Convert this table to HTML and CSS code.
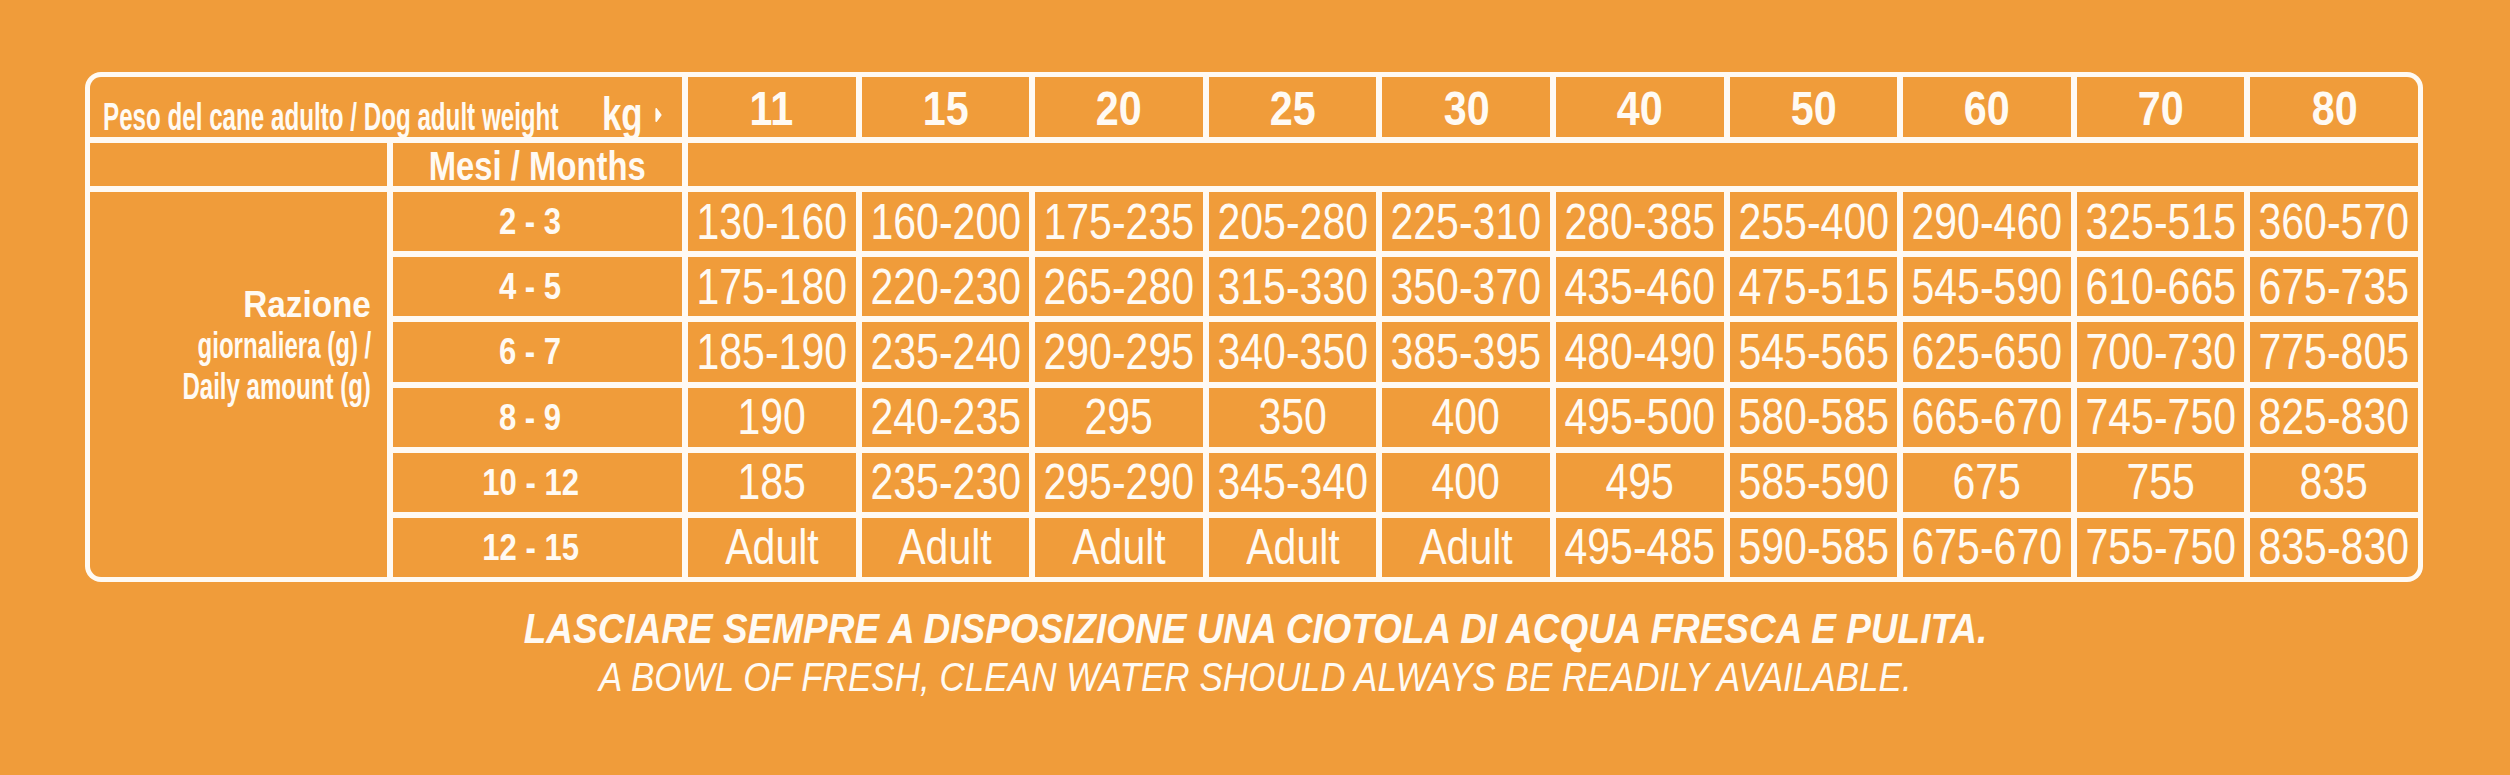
FILE: index.html
```html
<!DOCTYPE html>
<html lang="it">
<head>
<meta charset="utf-8">
<title>Razione giornaliera</title>
<link rel="stylesheet" href="styles.css">
</head>
<body>
<main class="page">
  <div class="chart">
    <div class="cell head-label corner-tl">
      <span class="head-text"><span class="t">Peso del cane adulto / Dog adult weight</span></span>
      <span class="kg"><span class="t">kg</span></span>
      <svg class="arrow" width="7" height="16" viewBox="0 0 7 16"><path d="M1.2 1.8 L5.8 8 L1.2 14.2 Z" fill="#fffaf3" stroke="#fffaf3" stroke-width="1.6" stroke-linejoin="round"/></svg>
    </div>
    <div class="cell weight"><span class="t">11</span></div>
    <div class="cell weight"><span class="t">15</span></div>
    <div class="cell weight"><span class="t">20</span></div>
    <div class="cell weight"><span class="t">25</span></div>
    <div class="cell weight"><span class="t">30</span></div>
    <div class="cell weight"><span class="t">40</span></div>
    <div class="cell weight"><span class="t">50</span></div>
    <div class="cell weight"><span class="t">60</span></div>
    <div class="cell weight"><span class="t">70</span></div>
    <div class="cell weight corner-tr"><span class="t">80</span></div>

    <div class="cell"></div>
    <div class="cell months-head"><span class="t">Mesi / Months</span></div>
    <div class="cell span-weights"></div>

    <div class="cell ration corner-bl">
      <span class="t line-a">Razione</span>
      <span class="t line-b">giornaliera (g) /</span>
      <span class="t line-b">Daily amount (g)</span>
    </div>

    <div class="cell month"><span class="t">2 - 3</span></div>
    <div class="cell val"><span class="t">130-160</span></div><div class="cell val"><span class="t">160-200</span></div><div class="cell val"><span class="t">175-235</span></div><div class="cell val"><span class="t">205-280</span></div><div class="cell val"><span class="t">225-310</span></div><div class="cell val"><span class="t">280-385</span></div><div class="cell val"><span class="t">255-400</span></div><div class="cell val"><span class="t">290-460</span></div><div class="cell val"><span class="t">325-515</span></div><div class="cell val"><span class="t">360-570</span></div>

    <div class="cell month"><span class="t">4 - 5</span></div>
    <div class="cell val"><span class="t">175-180</span></div><div class="cell val"><span class="t">220-230</span></div><div class="cell val"><span class="t">265-280</span></div><div class="cell val"><span class="t">315-330</span></div><div class="cell val"><span class="t">350-370</span></div><div class="cell val"><span class="t">435-460</span></div><div class="cell val"><span class="t">475-515</span></div><div class="cell val"><span class="t">545-590</span></div><div class="cell val"><span class="t">610-665</span></div><div class="cell val"><span class="t">675-735</span></div>

    <div class="cell month"><span class="t">6 - 7</span></div>
    <div class="cell val"><span class="t">185-190</span></div><div class="cell val"><span class="t">235-240</span></div><div class="cell val"><span class="t">290-295</span></div><div class="cell val"><span class="t">340-350</span></div><div class="cell val"><span class="t">385-395</span></div><div class="cell val"><span class="t">480-490</span></div><div class="cell val"><span class="t">545-565</span></div><div class="cell val"><span class="t">625-650</span></div><div class="cell val"><span class="t">700-730</span></div><div class="cell val"><span class="t">775-805</span></div>

    <div class="cell month"><span class="t">8 - 9</span></div>
    <div class="cell val"><span class="t">190</span></div><div class="cell val"><span class="t">240-235</span></div><div class="cell val"><span class="t">295</span></div><div class="cell val"><span class="t">350</span></div><div class="cell val"><span class="t">400</span></div><div class="cell val"><span class="t">495-500</span></div><div class="cell val"><span class="t">580-585</span></div><div class="cell val"><span class="t">665-670</span></div><div class="cell val"><span class="t">745-750</span></div><div class="cell val"><span class="t">825-830</span></div>

    <div class="cell month"><span class="t">10 - 12</span></div>
    <div class="cell val"><span class="t">185</span></div><div class="cell val"><span class="t">235-230</span></div><div class="cell val"><span class="t">295-290</span></div><div class="cell val"><span class="t">345-340</span></div><div class="cell val"><span class="t">400</span></div><div class="cell val"><span class="t">495</span></div><div class="cell val"><span class="t">585-590</span></div><div class="cell val"><span class="t">675</span></div><div class="cell val"><span class="t">755</span></div><div class="cell val"><span class="t">835</span></div>

    <div class="cell month"><span class="t">12 - 15</span></div>
    <div class="cell val"><span class="t">Adult</span></div><div class="cell val"><span class="t">Adult</span></div><div class="cell val"><span class="t">Adult</span></div><div class="cell val"><span class="t">Adult</span></div><div class="cell val"><span class="t">Adult</span></div><div class="cell val"><span class="t">495-485</span></div><div class="cell val"><span class="t">590-585</span></div><div class="cell val"><span class="t">675-670</span></div><div class="cell val"><span class="t">755-750</span></div><div class="cell val corner-br"><span class="t">835-830</span></div>
  </div>

  <div class="note">
    <p class="note-it"><span class="t">LASCIARE SEMPRE A DISPOSIZIONE UNA CIOTOLA DI ACQUA FRESCA E PULITA.</span></p>
    <p class="note-en"><span class="t">A BOWL OF FRESH, CLEAN WATER SHOULD ALWAYS BE READILY AVAILABLE.</span></p>
  </div>
</main>
</body>
</html>
```
FILE: styles.css
```css
html, body {
  margin: 0;
  padding: 0;
}

body {
  background: #f09c3a;
  color: #fffaf3;
  font-family: "Liberation Sans", Arial, sans-serif;
  width: 2510px;
  height: 775px;
  overflow: hidden;
}

.page {
  padding-top: 72px;
}

.t {
  display: inline-block;
  white-space: nowrap;
  transform-origin: center center;
}

.chart {
  margin-left: 85px;
  width: 2338px;
  height: 510px;
  box-sizing: border-box;
  padding: 5px;
  background: #fffaf3;
  border-radius: 16px;
  display: grid;
  grid-template-columns: 297px 289px repeat(10, minmax(0, 1fr));
  grid-template-rows: 60px 43px repeat(6, minmax(0, 1fr));
  gap: 6px;
}

.cell {
  background: #f09c3a;
  display: flex;
  align-items: center;
  justify-content: center;
  line-height: 1;
  white-space: nowrap;
  min-width: 0;
}

.corner-tl { border-top-left-radius: 11px; }
.corner-tr { border-top-right-radius: 11px; }
.corner-bl { border-bottom-left-radius: 11px; }
.corner-br { border-bottom-right-radius: 11px; }

.head-label {
  grid-column: 1 / span 2;
  justify-content: flex-start;
  align-items: baseline;
  padding: 13px 0 0 13px;
  font-weight: 700;
}

.head-text {
  display: inline-block;
  width: 455px;
  font-size: 39px;
}

.head-text .t {
  transform: scaleX(0.62);
  transform-origin: left center;
}

.kg {
  display: inline-block;
  width: 42px;
  font-size: 47px;
  margin-left: 44px;
}

.kg .t {
  transform: scaleX(0.74);
  transform-origin: left center;
}

.arrow {
  margin-left: 11px;
  align-self: flex-end;
  margin-bottom: 14px;
}

.weight {
  font-size: 48px;
  font-weight: 700;
  padding-top: 3px;
}

.weight .t {
  transform: scaleX(0.86);
}

.months-head {
  font-size: 40px;
  font-weight: 700;
  padding-top: 2px;
}

.months-head .t {
  transform: scaleX(0.82);
}

.span-weights {
  grid-column: 3 / span 10;
}

.ration {
  grid-column: 1;
  grid-row: 3 / span 6;
  flex-direction: column;
  align-items: flex-end;
  justify-content: flex-start;
  padding: 92px 16px 0 0;
  font-size: 37px;
  font-weight: 700;
  line-height: 41px;
}

.ration .line-a {
  transform: scaleX(0.9);
  transform-origin: right center;
}

.ration .line-b {
  transform: scaleX(0.65);
  transform-origin: right center;
}

.month {
  font-size: 37px;
  font-weight: 700;
  padding-right: 14px;
}

.month .t {
  transform: scaleX(0.84);
}

.val {
  font-size: 50px;
  font-weight: 400;
}

.val .t {
  transform: scaleX(0.82);
}

.note {
  margin-top: 22px;
  text-align: center;
}

.note p {
  margin: 0;
  line-height: 49px;
  font-style: italic;
}

.note-it {
  font-size: 42px;
  font-weight: 700;
}

.note-it .t {
  transform: scaleX(0.88);
}

.note-en {
  font-size: 40px;
  font-weight: 400;
}

.note-en .t {
  transform: scaleX(0.877);
}
```
